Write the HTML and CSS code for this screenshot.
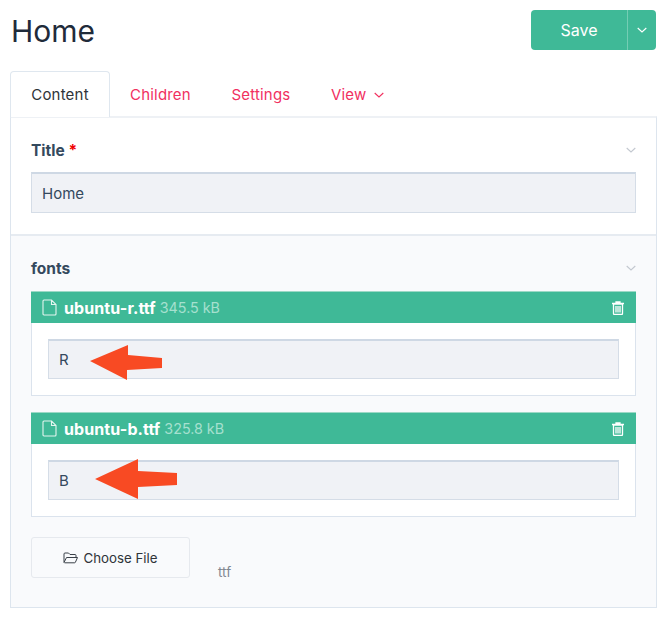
FILE: index.html
```html
<!DOCTYPE html>
<html lang="en">
<head>
    <meta charset="UTF-8">
    <meta name="viewport" content="width=device-width, initial-scale=1.0">
    <title>Home</title>
    <link rel="stylesheet" href="styles.css">
</head>
<body>
    <div class="page">
        <div class="titlebar">
            <h1>Home</h1>
            <div class="save">
                <span class="save-main">Save</span>
                <span class="save-more">
                    <svg width="10" height="6" viewBox="0 0 10 6"><path d="M.7 1L5 5l4.300-4" fill="none" stroke="#fff" stroke-width="1.100"/></svg>
                </span>
            </div>
        </div>

        <div class="tabs">
            <a class="tab active">Content</a>
            <a class="tab">Children</a>
            <a class="tab">Settings</a>
            <a class="tab">View
                <svg class="tab-caret" width="10" height="6" viewBox="0 0 10 6"><path d="M.7 1L5 5l4.300-4" fill="none" stroke="#f1305f" stroke-width="1.100"/></svg>
            </a>
        </div>

        <div class="panel">
            <section class="field">
                <div class="field-head">
                    <label>Title <span class="req">*</span></label>
                    <svg width="10" height="6" viewBox="0 0 10 6"><path d="M.7 1L5 5l4.300-4" fill="none" stroke="#c3c8d0" stroke-width="1.100"/></svg>
                </div>
                <div class="input">Home</div>
            </section>

            <section class="field files">
                <div class="field-head">
                    <label>fonts</label>
                    <svg width="10" height="6" viewBox="0 0 10 6"><path d="M.7 1L5 5l4.300-4" fill="none" stroke="#c3c8d0" stroke-width="1.100"/></svg>
                </div>

                <div class="file">
                    <div class="file-bar">
                        <svg class="file-icon" width="15" height="17" viewBox="0 0 15 17"><path d="M1 2a1 1 0 0 1 1-1h7.500L14 5.500V15a1 1 0 0 1-1 1H2a1 1 0 0 1-1-1zM9.500 1v4.500H14" fill="none" stroke="#e4f5ef" stroke-width="1.100"/></svg>
                        <strong>ubuntu-r.ttf</strong>
                        <span class="size">345.5 kB</span>
                        <svg class="trash" width="12" height="14" viewBox="0 0 12 14"><path d="M0 2.500h12M4 2.500V1h4v1.500M1.500 3h9v9.500a1 1 0 0 1-1 1h-7a1 1 0 0 1-1-1zM4 5v6.500M6 5v6.500M8 5v6.500" fill="none" stroke="#fff" stroke-width="1.300"/></svg>
                    </div>
                    <div class="file-body">
                        <div class="input small">R</div>
                        <svg class="arrow arrow-r" width="74" height="36" viewBox="0 0 74 36"><polygon points="0,16 38,0 38,10 72,13 72,23 37,25 37,35" fill="#f84a23"/></svg>
                    </div>
                </div>

                <div class="file">
                    <div class="file-bar">
                        <svg class="file-icon" width="15" height="17" viewBox="0 0 15 17"><path d="M1 2a1 1 0 0 1 1-1h7.500L14 5.500V15a1 1 0 0 1-1 1H2a1 1 0 0 1-1-1zM9.500 1v4.500H14" fill="none" stroke="#e4f5ef" stroke-width="1.100"/></svg>
                        <strong>ubuntu-b.ttf</strong>
                        <span class="size">325.8 kB</span>
                        <svg class="trash" width="12" height="14" viewBox="0 0 12 14"><path d="M0 2.500h12M4 2.500V1h4v1.500M1.500 3h9v9.500a1 1 0 0 1-1 1h-7a1 1 0 0 1-1-1zM4 5v6.500M6 5v6.500M8 5v6.500" fill="none" stroke="#fff" stroke-width="1.300"/></svg>
                    </div>
                    <div class="file-body">
                        <div class="input small">B</div>
                        <svg class="arrow arrow-b" width="84" height="42" viewBox="0 0 84 42"><polygon points="0,20 43,0 43,12 82,14 82,26 43,28 43,40" fill="#f84a23"/></svg>
                    </div>
                </div>

                <div class="upload">
                    <div class="choose">
                        <svg width="16" height="12" viewBox="0 0 16 12"><path d="M1 10.500V2a1 1 0 0 1 1-1h3.500l1.500 1.500h5a1 1 0 0 1 1 1V5M1 10.500L3.500 5.500h11L12.500 10a1 1 0 0 1-1 .8H1.500" fill="none" stroke="#3a4048" stroke-width="1"/></svg>
                        Choose File
                    </div>
                    <span class="hint">ttf</span>
                </div>
            </section>
        </div>
    </div>
</body>
</html>
```

FILE: styles.css
```css
* {
    box-sizing: border-box;
}

body {
    margin: 0;
    background-color: #fff;
    font-family: Inter, "Liberation Sans", sans-serif;
    color: #36475b;
}

.page {
    padding: 10px 15px 11px 10px;
}

.titlebar {
    display: flex;
    justify-content: space-between;
    align-items: flex-start;
    height: 61px;
}

h1 {
    margin: 0;
    padding-left: 1px;
    font-size: 30px;
    font-weight: 400;
    line-height: 42px;
    color: #1f2b3a;
}

.save {
    display: flex;
    width: 125px;
    height: 40px;
    margin-right: 1px;
    background-color: #3fb997;
    border-radius: 4px;
    color: #fff;
    font-size: 16px;
}

.save-main {
    width: 97px;
    display: flex;
    align-items: center;
    justify-content: center;
    border-right: 1px solid #74cdb4;
}

.save-more {
    flex: 1;
    display: flex;
    align-items: center;
    justify-content: center;
}

.tabs {
    display: flex;
    height: 46px;
    font-size: 15px;
}

.tab {
    display: flex;
    align-items: center;
    gap: 8px;
    padding: 0 20.500px 0 20px;
    color: #f1305f;
    letter-spacing: 0.2px;
}

.tab.active {
    width: 100px;
    justify-content: center;
    padding: 0;
    background-color: #fff;
    color: #2f3439;
    border: 1px solid #dfe7ef;
    border-bottom: none;
    border-radius: 4px 4px 0 0;
}

.tab-caret {
    margin-top: 1px;
}

.panel {
    height: 492px;
    margin-top: -1px;
    border: 1px solid #dde5ee;
    border-top: 2px solid #eef1f5;
}

.field {
    height: 118px;
    padding: 20px 20px 0;
    border-bottom: 2px solid #e6ebf1;
}

.field-head {
    display: flex;
    justify-content: space-between;
    align-items: center;
    height: 24px;
    margin-bottom: 10px;
}

label {
    font-size: 15.500px;
    font-weight: 700;
    color: #34495e;
}

.req {
    color: #f00000;
}

.input {
    display: flex;
    align-items: center;
    height: 41px;
    padding-left: 10px;
    background-color: #f0f2f6;
    border: 1px solid #d5dde7;
    border-top: 2px solid #ced8e4;
    font-size: 15px;
    color: #34495e;
}

.input.small {
    height: 40px;
    font-size: 15px;
}

.files {
    height: 371px;
    border-bottom: none;
    background-color: #f9fafc;
}

.files .field-head {
    margin-bottom: 11px;
}

.file {
    margin-bottom: 16px;
    background-color: #fff;
    border: 1px solid #dbe3ed;
    border-top: none;
}

.file-bar {
    display: flex;
    align-items: center;
    height: 32px;
    margin: 0 -1px;
    padding: 0 12px 0 11px;
    background-color: #3fb997;
    border-top: 1px solid #9cd9c6;
    color: #fff;
    font-size: 16px;
}

.file-bar strong {
    letter-spacing: 0.1px;
}

.file-icon {
    margin-right: 7px;
}

.size {
    margin-left: 4px;
    font-size: 14.300px;
    color: #a6e0cf;
}

.trash {
    margin-left: auto;
}

.file-body {
    position: relative;
    padding: 16px;
}

.arrow {
    position: absolute;
}

.arrow-r {
    left: 58px;
    top: 22px;
}

.arrow-b {
    left: 63px;
    top: 15px;
}

.upload {
    display: flex;
    align-items: flex-start;
    margin-top: 20px;
}

.choose {
    display: flex;
    align-items: center;
    justify-content: center;
    gap: 4px;
    width: 159px;
    height: 41px;
    background-color: #f9fafc;
    border: 1px solid #e6e9ee;
    border-radius: 3px;
    font-size: 13.300px;
    color: #2f3439;
}

.hint {
    margin-left: 28px;
    margin-top: 27px;
    font-size: 13.500px;
    color: #808791;
}
```
